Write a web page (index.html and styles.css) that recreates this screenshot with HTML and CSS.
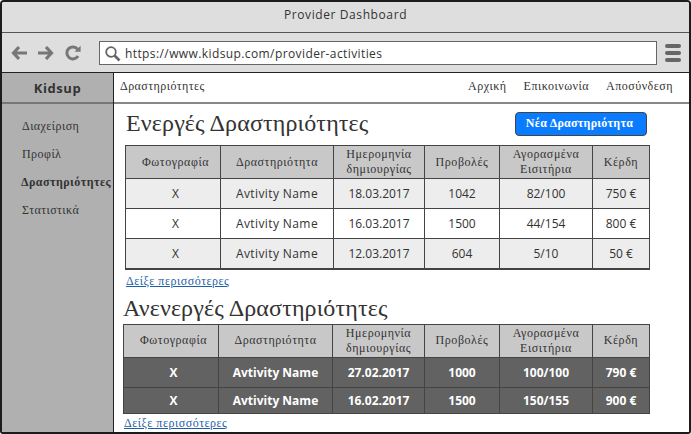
FILE: index.html
```html
<!DOCTYPE html>
<html lang="el">
<head>
    <meta charset="UTF-8">
    <meta name="viewport" content="width=device-width, initial-scale=1.0">
    <title>Provider Dashboard</title>
    <link rel="stylesheet" href="styles.css">
</head>
<body>

<div class="window">
    <div class="titleBar">Provider Dashboard</div>

    <div class="toolBar">
        <svg class="navIcon" width="17" height="16" viewBox="0 0 17 16"><path d="M8 2 L2.5 8 L8 14 M3 8 H16" fill="none" stroke="#777" stroke-width="3.2"/></svg>
        <svg class="navIcon" width="17" height="16" viewBox="0 0 17 16"><path d="M9 2 L14.5 8 L9 14 M14 8 H1" fill="none" stroke="#777" stroke-width="3.2"/></svg>
        <svg class="navIcon reload" width="17" height="16" viewBox="0 0 17 16"><path d="M13 11 A6 6 0 1 1 12.6 4.2" fill="none" stroke="#777" stroke-width="3"/><path d="M9.5 6.8 H15.6 V0.8 Z" fill="#777"/></svg>
        <div class="urlBox">
            <svg width="17" height="17" viewBox="0 0 17 17"><circle cx="7" cy="7" r="4.8" fill="none" stroke="#666" stroke-width="1.8"/><path d="M10.5 10.5 L15.5 15.5" stroke="#666" stroke-width="2.6"/></svg>
            <span>https://www.kidsup.com/provider-activities</span>
        </div>
        <div class="burger"><i></i><i></i><i></i></div>
    </div>

    <div class="appArea">
        <div class="sideBar">
            <div class="brand">Kidsup</div>
            <ul class="sideMenu">
                <li>Διαχείριση</li>
                <li>Προφίλ</li>
                <li class="active">Δραστηριότητες</li>
                <li>Στατιστικά</li>
            </ul>
        </div>

        <div class="mainArea">
            <div class="topNav">
                <span class="crumb">Δραστηριότητες</span>
                <span class="topLink">Αρχική</span>
                <span class="topLink">Επικοινωνία</span>
                <span class="topLink">Αποσύνδεση</span>
            </div>

            <div class="section activeSection">
                <div class="headRow">
                    <h2>Ενεργές Δραστηριότητες</h2>
                    <button class="newBtn">Νέα Δραστηριότητα</button>
                </div>
                <table>
                    <thead>
                    <tr>
                        <th class="colPhoto">Φωτογραφία</th>
                        <th class="colName">Δραστηριότητα</th>
                        <th class="colDate">Ημερομηνία<br>δημιουργίας</th>
                        <th class="colViews">Προβολές</th>
                        <th class="colTickets">Αγορασμένα<br>Εισιτήρια</th>
                        <th>Κέρδη</th>
                    </tr>
                    </thead>
                    <tbody>
                    <tr class="odd"><td>X</td><td>Avtivity Name</td><td>18.03.2017</td><td>1042</td><td>82/100</td><td>750 €</td></tr>
                    <tr><td>X</td><td>Avtivity Name</td><td>16.03.2017</td><td>1500</td><td>44/154</td><td>800 €</td></tr>
                    <tr class="odd"><td>X</td><td>Avtivity Name</td><td>12.03.2017</td><td>604</td><td>5/10</td><td>50 €</td></tr>
                    </tbody>
                </table>
                <a class="moreLink" href="#">Δείξε περισσότερες</a>
            </div>

            <div class="section inactiveSection">
                <h2>Ανενεργές Δραστηριότητες</h2>
                <table>
                    <thead>
                    <tr>
                        <th class="colPhoto">Φωτογραφία</th>
                        <th class="colName">Δραστηριότητα</th>
                        <th class="colDate">Ημερομηνία<br>δημιουργίας</th>
                        <th class="colViews">Προβολές</th>
                        <th class="colTickets">Αγορασμένα<br>Εισιτήρια</th>
                        <th>Κέρδη</th>
                    </tr>
                    </thead>
                    <tbody>
                    <tr><td>X</td><td>Avtivity Name</td><td>27.02.2017</td><td>1000</td><td>100/100</td><td>790 €</td></tr>
                    <tr class="shortRow"><td>X</td><td>Avtivity Name</td><td>16.02.2017</td><td>1500</td><td>150/155</td><td>900 €</td></tr>
                    </tbody>
                </table>
                <a class="moreLink" href="#">Δείξε περισσότερες</a>
            </div>
        </div>
    </div>
</div>

</body>
</html>
```

FILE: styles.css
```css
* {
    box-sizing: border-box;
}

html, body {
    margin: 0;
    padding: 0;
    height: 100%;
    overflow: hidden;
    background-color: #fff;
}

body {
    font-family: 'Open Sans', sans-serif;
    color: #333;
}

.window {
    width: 691px;
    height: 434px;
    border: 2px solid #1c1c1c;
    border-radius: 4px 4px 3px 3px;
    display: flex;
    flex-direction: column;
    overflow: hidden;
}

.titleBar {
    height: 31px;
    flex: none;
    background-color: #dedede;
    border-bottom: 1px solid #555;
    display: flex;
    align-items: center;
    justify-content: center;
    font-size: 12px;
    letter-spacing: 0.6px;
    padding-bottom: 5px;
}

.toolBar {
    height: 40px;
    flex: none;
    background-color: #dedede;
    border-bottom: 1px solid #222;
    display: flex;
    align-items: center;
    padding: 1px 8px 0 9px;
}

.navIcon {
    margin-right: 9px;
    flex: none;
}

.reload {
    margin-left: 2px;
    margin-right: 17px;
}

.urlBox {
    flex: 1;
    height: 24px;
    background-color: #fff;
    border: 1px solid #666;
    display: flex;
    align-items: center;
    gap: 4px;
    padding-left: 4px;
    font-size: 12px;
    letter-spacing: 0.4px;
}

.burger {
    width: 16px;
    margin-left: 8px;
    display: flex;
    flex-direction: column;
    gap: 3px;
}

.burger i {
    display: block;
    height: 4px;
    border-radius: 2px;
    background-color: #666;
}

.appArea {
    flex: 1;
    display: flex;
    min-height: 0;
}

.sideBar {
    width: 112px;
    flex: none;
    background-color: #b0b0b0;
    border-right: 1px solid #222;
}

.brand {
    height: 31px;
    border-bottom: 2px solid #777;
    display: flex;
    align-items: center;
    justify-content: center;
    font-size: 13px;
    font-weight: bold;
    letter-spacing: 0.6px;
}

.sideMenu {
    list-style: none;
    margin: 0;
    padding: 12px 0 0 20px;
    font-family: 'Liberation Serif', serif;
    font-size: 12px;
    letter-spacing: 0.45px;
}

.sideMenu li {
    height: 28px;
    line-height: 20px;
}

.sideMenu .active {
    height: 28px;
    font-weight: bold;
    margin-left: -1px;
    white-space: nowrap;
}

.mainArea {
    flex: 1;
    min-width: 0;
    background-color: #fff;
}

.topNav {
    height: 31px;
    border-bottom: 2px solid #888;
    display: flex;
    align-items: center;
    gap: 17px;
    padding: 0 16px 3px 6px;
    font-family: 'Liberation Serif', serif;
    font-size: 12px;
    letter-spacing: 0.45px;
}

.crumb {
    margin-right: auto;
}

.topLink {
    letter-spacing: 0.5px;
}

.section {
    padding-right: 39px;
}

.activeSection {
    padding-left: 11px;
}

.inactiveSection {
    padding-left: 9px;
}

.headRow {
    height: 41px;
    display: flex;
    align-items: center;
    justify-content: space-between;
    padding-right: 3px;
}

h2 {
    margin: 0;
    font-family: 'Liberation Serif', serif;
    font-size: 24px;
    font-weight: normal;
    letter-spacing: 0.14px;
    white-space: nowrap;
}

.activeSection h2 {
    margin-left: 1px;
    padding-bottom: 2px;
}

.inactiveSection h2 {
    height: 30px;
    line-height: 29px;
}

.newBtn {
    width: 132px;
    height: 24px;
    margin-bottom: 2px;
    background-color: #0a7cff;
    border: 1px solid #444;
    border-radius: 4px;
    color: #fff;
    font-family: 'Liberation Serif', serif;
    font-size: 12px;
    font-weight: bold;
    letter-spacing: 0.25px;
    padding: 0 3px 0 0;
}

table {
    width: 100%;
    border-collapse: collapse;
    table-layout: fixed;
    font-size: 12px;
}

th, td {
    border: 1px solid #444;
    padding: 0;
    text-align: center;
}

th {
    height: 33px;
    background-color: #c8c8c8;
    font-family: 'Liberation Serif', serif;
    font-size: 12px;
    font-weight: normal;
    letter-spacing: 0.55px;
    line-height: 15px;
}

th:first-child, td:first-child {
    padding-left: 5px;
}

td {
    height: 30px;
}

td:nth-child(2) {
    letter-spacing: 0.4px;
}

.odd td {
    background-color: #ededed;
}

.activeSection tbody tr:last-child td {
    border-bottom-width: 2px;
}

.colPhoto {
    width: 95px;
}

.activeSection .colName {
    width: 113px;
}

.inactiveSection .colName {
    width: 114px;
}

.activeSection .colDate {
    width: 91px;
}

.inactiveSection .colDate {
    width: 92px;
}

.colViews {
    width: 75px;
}

.colTickets {
    width: 93px;
}

.inactiveSection td {
    background-color: #626262;
    color: #fff;
    font-weight: bold;
}

.inactiveSection td:nth-child(2) {
    letter-spacing: 0;
}

.inactiveSection .shortRow td {
    height: 26px;
}

.moreLink {
    display: block;
    margin-top: 3px;
    margin-left: 1px;
    font-family: 'Liberation Serif', serif;
    font-size: 12px;
    letter-spacing: 0.5px;
    color: #1d5fa8;
    line-height: 16px;
}

.inactiveSection .moreLink {
    margin-top: 1px;
}

.activeSection .moreLink {
    height: 21px;
}
```
